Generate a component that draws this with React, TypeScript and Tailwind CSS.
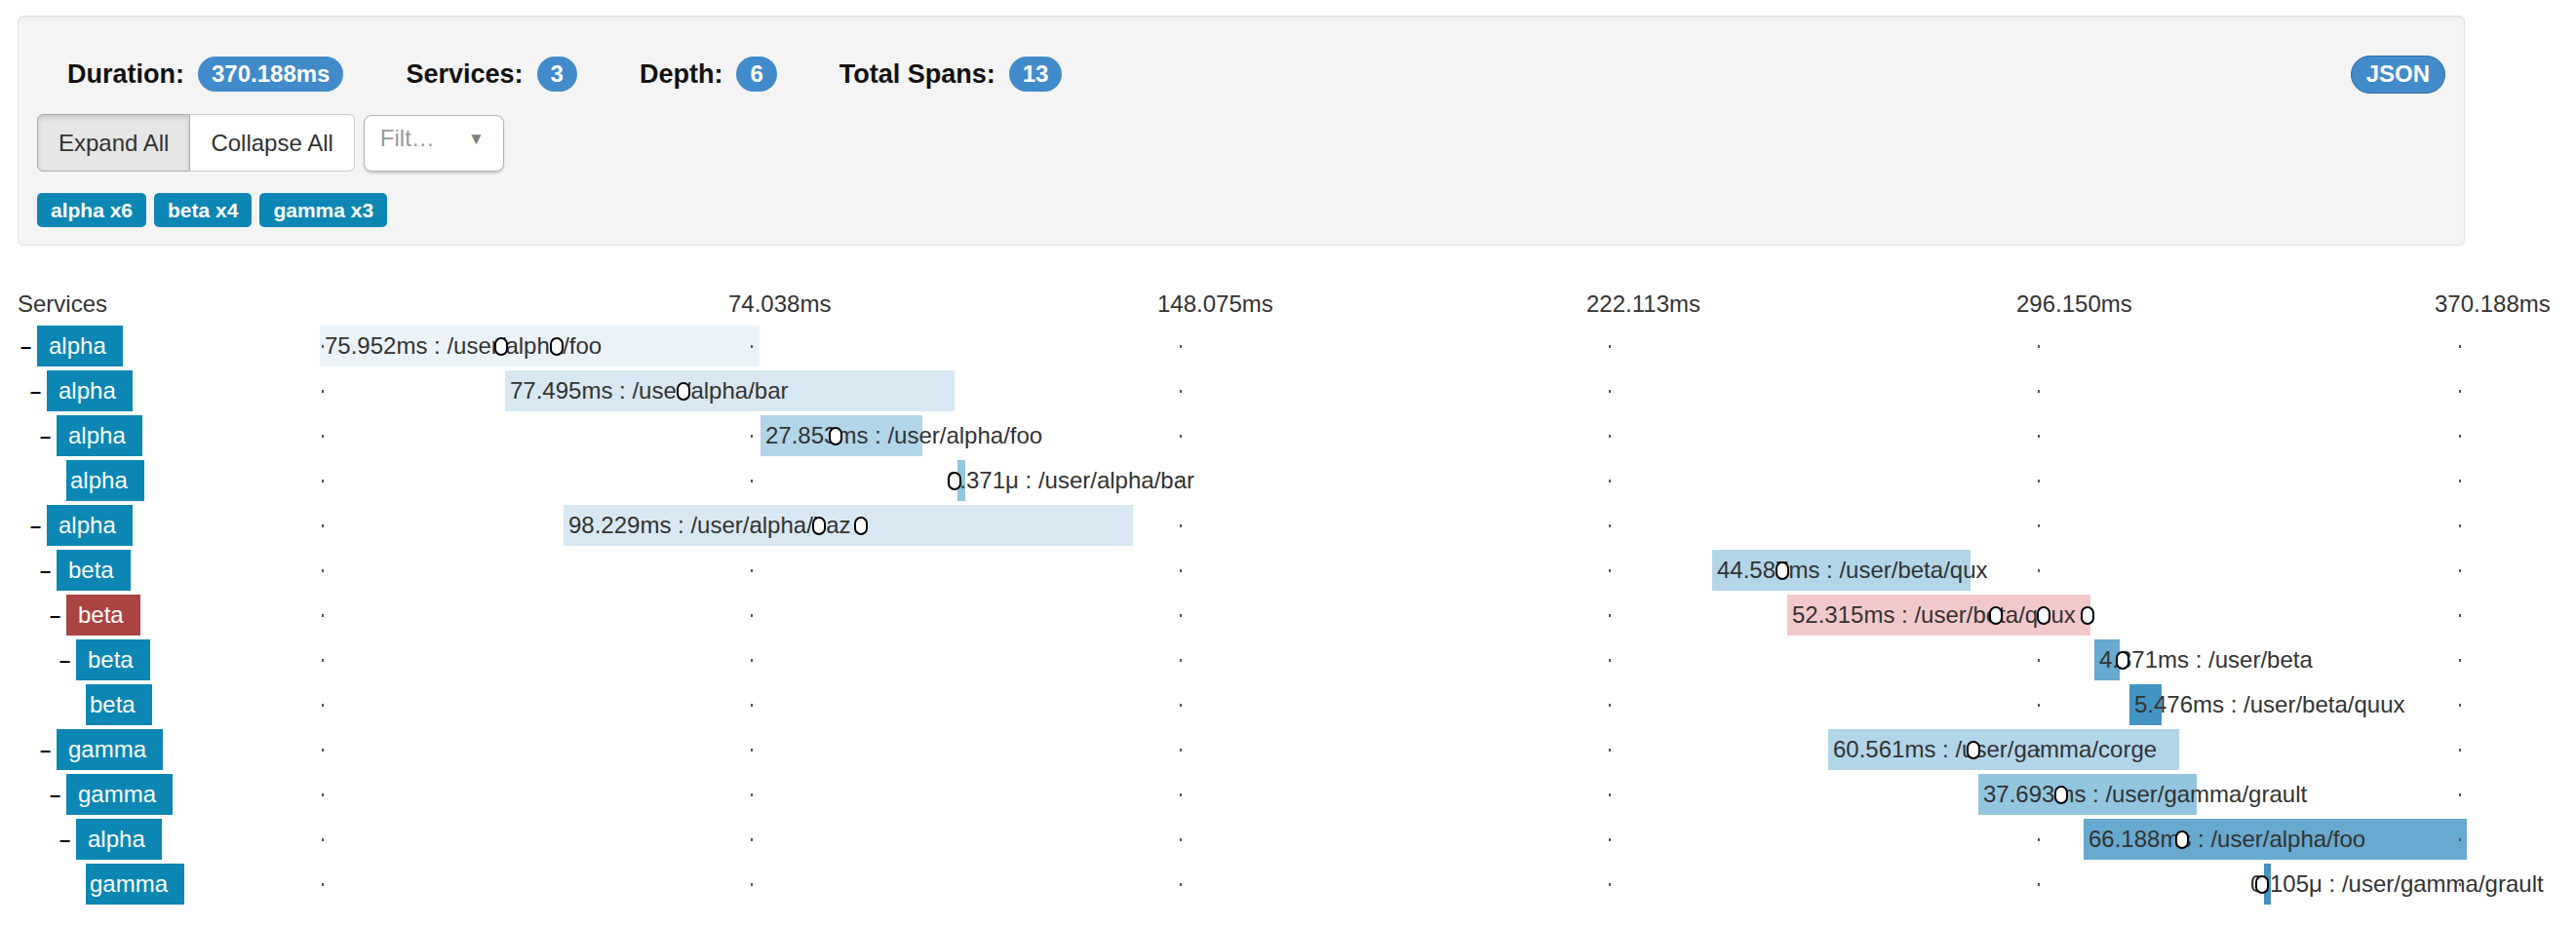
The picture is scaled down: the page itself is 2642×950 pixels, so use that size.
import React from "react";

type Row = {
  depth: number;
  service: string;
  leaf: boolean;
  error?: boolean;
  left: number;
  width: number;
  color: string;
  label: string;
  textOffset?: number;
  markers: number[];
};

const rows: Row[] = [
  { depth: 0, service: "alpha", leaf: false, left: 0, width: 451, color: "#ebf3f9", label: "75.952ms : /user/alpha/foo", markers: [179, 236] },
  { depth: 1, service: "alpha", leaf: false, left: 190, width: 461, color: "#d8e8f2", label: "77.495ms : /user/alpha/bar", markers: [366] },
  { depth: 2, service: "alpha", leaf: false, left: 452, width: 166, color: "#b3d5e8", label: "27.853ms : /user/alpha/foo", markers: [522] },
  { depth: 3, service: "alpha", leaf: true, left: 654, width: 8, color: "#92c5de", label: "0.371μ : /user/alpha/bar", textOffset: -11, markers: [644] },
  { depth: 1, service: "alpha", leaf: false, left: 250, width: 584, color: "#d8e8f2", label: "98.229ms : /user/alpha/baz", markers: [505, 548] },
  { depth: 2, service: "beta", leaf: false, left: 1428, width: 265, color: "#b3d5e8", label: "44.587ms : /user/beta/qux", markers: [1493] },
  { depth: 3, service: "beta", leaf: false, error: true, left: 1505, width: 311, color: "#f2c9ca", label: "52.315ms : /user/beta/quux", markers: [1712, 1761, 1806] },
  { depth: 4, service: "beta", leaf: false, left: 1820, width: 26, color: "#67a9cf", label: "4.371ms : /user/beta", markers: [1842] },
  { depth: 5, service: "beta", leaf: true, left: 1856, width: 33, color: "#4393c3", label: "5.476ms : /user/beta/quux", markers: [] },
  { depth: 2, service: "gamma", leaf: false, left: 1547, width: 360, color: "#b3d5e8", label: "60.561ms : /user/gamma/corge", markers: [1689] },
  { depth: 3, service: "gamma", leaf: false, left: 1701, width: 224, color: "#92c5de", label: "37.693ms : /user/gamma/grault", markers: [1779] },
  { depth: 4, service: "alpha", leaf: false, left: 1809, width: 393, color: "#67a9cf", label: "66.188ms : /user/alpha/foo", markers: [1903] },
  { depth: 5, service: "gamma", leaf: true, left: 1994, width: 7, color: "#4393c3", label: "0.105μ : /user/gamma/grault", textOffset: -14, markers: [1985] },
];

const indent = ["pl-[3px]", "pl-[13px]", "pl-[23px]", "pl-[33px]", "pl-[43px]", "pl-[53px]"];

const dots = [2, 442, 882, 1322, 1762, 2194];
const ticks = [
  { x: 419, t: "74.038ms" },
  { x: 859, t: "148.075ms" },
  { x: 1299, t: "222.113ms" },
  { x: 1740, t: "296.150ms" },
  { x: 2169, t: "370.188ms" },
];

function Badge({ children }: { children: React.ReactNode }) {
  return (
    <span className="inline-flex items-center h-[36px] px-[14px] rounded-full bg-[#428bca] text-white text-[24px] font-bold leading-none">
      {children}
    </span>
  );
}

function Stat({ label, value }: { label: string; value: string }) {
  return (
    <div className="flex items-center gap-[14px]">
      <span className="text-[27px] font-bold text-[#111] leading-none">{label}</span>
      <Badge>{value}</Badge>
    </div>
  );
}

export default function App() {
  return (
    <div className="w-[2642px] h-[950px] bg-white text-[#333] font-['Liberation_Sans',Arial,sans-serif] overflow-hidden">
      <div className="pl-[18px] pt-[16px] w-[2530px]">
        {/* Summary panel */}
        <div className="w-[2510px] h-[236px] border border-[#e3e3e3] rounded-[6px] bg-[#f4f4f4] shadow-[inset_0_1px_1px_rgba(0,0,0,0.05)] px-[19px] pt-[39px]">
          <div className="flex items-center justify-between h-[40px]">
            <div className="flex items-center gap-[64px] ml-[31px]">
              <Stat label="Duration:" value="370.188ms" />
              <Stat label="Services:" value="3" />
              <Stat label="Depth:" value="6" />
              <Stat label="Total Spans:" value="13" />
            </div>
            <button className="h-[39px] px-[15px] rounded-full border border-[#2e6da4] bg-[#428bca] text-white text-[24px] font-bold leading-none">
              JSON
            </button>
          </div>

          <div className="flex items-center mt-[21px] h-[59px]">
            <div className="flex h-[59px]">
              <button className="h-full px-[21px] text-[24px] text-[#333] bg-[#e6e6e6] border border-[#adadad] rounded-l-[6px] shadow-[inset_0_3px_5px_rgba(0,0,0,0.125)]">
                Expand All
              </button>
              <button className="h-full px-[21px] text-[24px] text-[#333] bg-white border border-l-0 border-[#ccc] rounded-r-[6px]">
                Collapse All
              </button>
            </div>
            <div className="ml-[9px] w-[144px] h-[58px] bg-white border border-[#b3b3b3] rounded-[8px] shadow-[0_2px_2px_rgba(0,0,0,0.15)] flex items-center justify-between pl-[16px] pr-[19px]">
              <span className="text-[24px] text-[#999] -mt-[9px]">Filt…</span>
              <span className="text-[17px] text-[#808080] -mt-[8px]">▼</span>
            </div>
          </div>

          <div className="flex gap-[8px] mt-[22px] h-[35px]">
            {["alpha x6", "beta x4", "gamma x3"].map((t) => (
              <span key={t} className="flex items-center px-[14px] rounded-[5px] bg-[#0c87b4] text-white text-[21px] font-bold leading-none">
                {t}
              </span>
            ))}
          </div>
        </div>

        {/* Timeline header */}
        <div className="flex items-center mt-[38px] h-[44px]">
          <div className="w-[310px] text-[24px]">Services</div>
          <div className="relative flex-1 h-full">
            {ticks.map((k) => (
              <span key={k.t} className="absolute top-0 h-full flex items-center text-[24px] whitespace-nowrap" style={{ left: k.x }}>
                {k.t}
              </span>
            ))}
          </div>
        </div>

        {/* Span rows */}
        <div className="flex flex-col gap-[4px]">
          {rows.map((r, i) => (
            <div key={i} className="flex h-[42px]">
              <div className={`w-[310px] flex items-center ${indent[r.depth]}`}>
                <span className="w-[11px] text-[20px] font-bold leading-none text-black">{r.leaf ? "" : "–"}</span>
                <span
                  className={`ml-[6px] h-[42px] flex items-center text-[24px] text-white pr-[17px] ${r.leaf ? "pl-[4px]" : "pl-[12px]"} ${r.error ? "bg-[#a94442]" : "bg-[#0c87b4]"}`}
                >
                  {r.service}
                </span>
              </div>
              <div className="relative flex-1 h-full">
                <div className="absolute top-0 h-full" style={{ left: r.left, width: r.width, backgroundColor: r.color }} />
                {dots.map((d) => (
                  <span key={d} className="absolute top-[20px] w-[2px] h-[3px] bg-[#555]" style={{ left: d }} />
                ))}
                <span
                  className="absolute top-0 h-full flex items-center text-[24px] text-[#333] whitespace-nowrap"
                  style={{ left: r.left + (r.textOffset ?? 5) }}
                >
                  {r.label}
                </span>
                {r.markers.map((m) => (
                  <span key={m} className="absolute top-[12px] w-[14px] h-[19px] rounded-full border-2 border-black bg-white" style={{ left: m }} />
                ))}
              </div>
            </div>
          ))}
        </div>
      </div>
    </div>
  );
}
